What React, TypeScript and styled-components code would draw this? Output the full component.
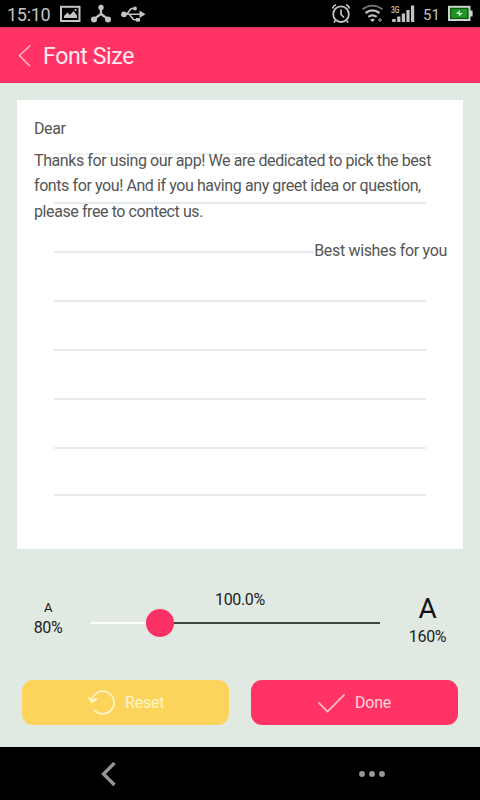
import React from "react";
import styled, { createGlobalStyle } from "styled-components";

const GlobalStyle = createGlobalStyle`
  * { box-sizing: border-box; }
  body { margin: 0; background: #000; }
`;

const Screen = styled.div`
  width: 480px;
  height: 800px;
  display: flex;
  flex-direction: column;
  background: #e0eae2;
  font-family: Roboto, "Noto Sans", sans-serif;
  overflow: hidden;
  white-space: nowrap;
`;

const StatusBar = styled.div`
  height: 27px;
  flex: none;
  display: flex;
  align-items: center;
  background: #000;
  color: #c4c4c4;
  padding: 2px 6px 0 7px;
`;

const Clock = styled.span`
  width: 53px;
  font-size: 18px;
  line-height: 24px;
  letter-spacing: -0.3px;
`;

const StatusIcons = styled.div`
  flex: 1;
  height: 25px;
  display: flex;
`;

const Level = styled.span`
  width: 25px;
  font-size: 15px;
  line-height: 25px;
  padding-top: 1px;
`;

const TitleBar = styled.header`
  height: 56px;
  flex: none;
  display: flex;
  align-items: center;
  background: #ff3465;
  border-top: 1px solid #d63a5e;
  color: #ffe9ee;
  padding: 1px 0 0 18px;
`;

const Title = styled.h1`
  margin: 0 0 0 11px;
  padding-top: 2px;
  font-size: 23px;
  line-height: 30px;
  font-weight: 400;
  letter-spacing: -0.35px;
`;

const Paper = styled.main`
  display: grid;
  width: 446px;
  height: 449px;
  flex: none;
  margin: 17px 0 0 17px;
  background: #fff;
`;

const Rules = styled.div`
  grid-area: 1 / 1;
  display: flex;
  flex-direction: column;
  padding: 53px 37px 0;
`;

const Rule = styled.div<{ $gap?: number; $tone?: string }>`
  height: 2px;
  flex: none;
  margin-bottom: ${(p) => p.$gap ?? 47}px;
  background: ${(p) => p.$tone ?? "#e5eaec"};
`;

const Letter = styled.div`
  grid-area: 1 / 1;
  z-index: 1;
  padding: 16px 16px 0 17px;
  color: #555;
  font-size: 16px;
  line-height: 25.5px;
  letter-spacing: -0.41px;
`;

const Paragraph = styled.p<{ $top?: number }>`
  margin: ${(p) => p.$top ?? 0}px 0 0;
`;

const Line = styled.span`
  display: block;
`;

const Signature = styled.p`
  width: max-content;
  margin: 14px 0 0 auto;
  letter-spacing: -0.33px;
  background: #fff;
`;

const SizeControl = styled.section`
  flex: none;
  height: 131px;
  display: flex;
  color: #222;
  font-size: 16px;
  line-height: 20px;
  letter-spacing: -0.35px;
`;

const Bound = styled.div<{ $width: number; $indent: number; $top: number }>`
  width: ${(p) => p.$width}px;
  padding: ${(p) => p.$top}px 0 0 ${(p) => p.$indent}px;
  display: flex;
  flex-direction: column;
  align-items: center;
`;

const Sample = styled.span<{ $size: number; $height: number }>`
  font-size: ${(p) => p.$size}px;
  line-height: ${(p) => p.$height}px;
  color: #111;
`;

const SliderColumn = styled.div`
  width: 289px;
  padding-top: 41px;
`;

const Value = styled.div`
  height: 19px;
  padding-left: 124px;
`;

const Track = styled.div`
  height: 28px;
  display: flex;
  align-items: center;
`;

const Segment = styled.div<{ $filled?: boolean }>`
  height: 2px;
  width: ${(p) => (p.$filled ? "55px" : "auto")};
  flex: ${(p) => (p.$filled ? "none" : "1")};
  background: ${(p) => (p.$filled ? "#fbfdfa" : "#3f4542")};
`;

const Knob = styled.div`
  width: 28px;
  height: 28px;
  flex: none;
  border-radius: 50%;
  background: #fb3067;
`;

const Actions = styled.div`
  flex: none;
  display: flex;
  gap: 22px;
  padding: 0 22px;
  height: 67px;
`;

const Button = styled.button<{ $color: string; $ink: string }>`
  flex: 1;
  height: 45px;
  display: flex;
  align-items: center;
  border: 0;
  border-radius: 11px;
  padding: 0 0 0 66px;
  background: ${(p) => p.$color};
  color: ${(p) => p.$ink};
  font: 400 16px/20px Roboto, sans-serif;
  letter-spacing: -0.2px;
`;

const Label = styled.span`
  margin-left: 9px;
`;

const NavBar = styled.nav`
  flex: 1;
  display: flex;
  align-items: center;
  background: #000;
  padding-left: 101px;
`;

const MoreIcon = styled.svg`
  margin-left: 242px;
`;

const LeftIcons = () => (
  <svg width="110" height="25" fill="none" stroke="#c4c4c4">
    <rect x="1" y="4.8" width="18.5" height="14.2" strokeWidth="2" />
    <path d="M4 16V14L7.5 10.5L10 13L13.5 9L17 13.5V16Z" fill="#c4c4c4" stroke="none" />
    <circle cx="15.5" cy="8" r="1.1" fill="#c4c4c4" stroke="none" />
    <path d="M41 5.5V12L33.5 17.5M41 12L48.5 17.5" strokeWidth="2.2" />
    <g fill="#c4c4c4" stroke="none">
      <circle cx="41" cy="5.5" r="2.7" />
      <circle cx="34" cy="17.5" r="3" />
      <circle cx="48" cy="17.5" r="3" />
      <circle cx="64" cy="12.3" r="2.9" />
      <path d="M79.5 8.5L85.5 12.3L79.5 16Z" />
      <circle cx="75" cy="6.5" r="1.9" />
      <rect x="76" y="16" width="4" height="3.6" />
    </g>
    <path d="M64 12.3H81M67 12L70.5 7.3Q71 6.5 72 6.5H75M69.5 12.5L73 17Q73.6 17.8 74.5 17.8H78" strokeWidth="1.6" />
  </svg>
);

const RightIcons = () => (
  <svg width="94" height="25" fill="none" stroke="#c4c4c4">
    <circle cx="12" cy="12.2" r="7.8" strokeWidth="1.8" />
    <path d="M12 7.5V12.5L15 15.5M3.5 6.5Q4.5 3.5 7 2.8M17 2.8Q19.8 3.7 20.5 6.5M6.5 18.5L4.8 20.5M17.5 18.5L19.2 20.5" strokeWidth="1.7" />
    <path d="M33.5 7.3Q43.5 0 53.5 7.3" stroke="#777" strokeWidth="1.8" />
    <path d="M36.5 11Q43.5 5.8 50.5 11M39.3 14.8Q43.5 11.8 47.7 14.8" strokeWidth="2.2" />
    <path d="M41 17.5Q43.5 16 46 17.5L43.5 20Z" fill="#c4c4c4" stroke="none" />
    <path d="M51 16V20M49 18H53" stroke="#777" strokeWidth="1.5" />
    <g fill="#c4c4c4" stroke="none">
      <rect x="63.2" y="17" width="3.4" height="3" />
      <rect x="68.2" y="14.5" width="3.2" height="5.5" />
      <rect x="72.8" y="11.5" width="3.2" height="8.5" />
      <rect x="77.4" y="8" width="3.2" height="12" />
      <rect x="82" y="3.5" width="3.2" height="16.5" />
      <text x="62" y="10.8" fontSize="9" fontWeight="500" textLength="8.5" lengthAdjust="spacingAndGlyphs" fontFamily="Roboto">3G</text>
    </g>
  </svg>
);

const BatteryIcon = () => (
  <svg width="26" height="25">
    <rect x="1" y="4.8" width="20.5" height="13.2" fill="#229426" stroke="#cfd3cf" strokeWidth="2" />
    <rect x="2.7" y="6.4" width="17.1" height="10" fill="none" stroke="#0a4d10" />
    <rect x="22" y="8.5" width="2.6" height="6" fill="#cfd3cf" />
    <path d="M11.7 8L8 12H11L10.6 14.8L15 11H11.8Z" fill="#bdf3bc" />
  </svg>
);

const BackIcon = () => (
  <svg width="14" height="24" fill="none" stroke="#ffb9ca" strokeWidth="1.5">
    <path d="M12.3 1.5L1.5 11.5L12 22.3" />
  </svg>
);

const ResetIcon = () => (
  <svg width="28" height="28" fill="none" stroke="#fff3c4" strokeWidth="1.8">
    <path d="M3.8 11.5A11.2 11.3 0 1 1 6.2 20.8" />
    <path d="M.8 8.3L4 12.6L9 9.6" strokeWidth="2.4" />
  </svg>
);

const CheckIcon = () => (
  <svg width="29" height="22" fill="none" stroke="#ffc3d0" strokeWidth="1.7">
    <path d="M1.5 10.5L10.5 19.5L27.5 2.5" />
  </svg>
);

export default function App() {
  return (
    <Screen>
      <GlobalStyle />
      <StatusBar>
        <Clock>15:10</Clock>
        <StatusIcons><LeftIcons /></StatusIcons>
        <RightIcons />
        <Level>51</Level>
        <BatteryIcon />
      </StatusBar>
      <TitleBar>
        <BackIcon />
        <Title>Font Size</Title>
      </TitleBar>
      <Paper>
        <Rules>
          <Rule $tone="#f0f1f1" />
          <Rule />
          <Rule />
          <Rule />
          <Rule />
          <Rule />
          <Rule $gap={45} />
          <Rule />
        </Rules>
        <Letter>
          <Paragraph>Dear</Paragraph>
          <Paragraph $top={6}>
            <Line>Thanks for using our app! We are dedicated to pick the best</Line>
            <Line>fonts for you! And if you having any greet idea or question,</Line>
            <Line>please free to contect us.</Line>
          </Paragraph>
          <Signature>Best wishes for you</Signature>
        </Letter>
      </Paper>
      <SizeControl>
        <Bound $width={91} $indent={5} $top={49}>
          <Sample $size={13} $height={20}>A</Sample>
          80%
        </Bound>
        <SliderColumn>
          <Value>100.0%</Value>
          <Track>
            <Segment $filled />
            <Knob />
            <Segment />
          </Track>
        </SliderColumn>
        <Bound $width={95} $indent={0} $top={42}>
          <Sample $size={28} $height={36}>A</Sample>
          160%
        </Bound>
      </SizeControl>
      <Actions>
        <Button $color="#fcd45b" $ink="#fff5ca"><ResetIcon /><Label>Reset</Label></Button>
        <Button $color="#ff3465" $ink="#ffd5df"><CheckIcon /><Label>Done</Label></Button>
      </Actions>
      <NavBar>
        <svg width="15" height="26" fill="none" stroke="#949494" strokeWidth="3.4">
          <path d="M13.5 2L2.5 13L13.5 24" />
        </svg>
        <MoreIcon width="27" height="8" fill="#999">
          <circle cx="4" cy="4" r="2.9" />
          <circle cx="14" cy="4" r="2.9" />
          <circle cx="24" cy="4" r="2.9" />
        </MoreIcon>
      </NavBar>
    </Screen>
  );
}
